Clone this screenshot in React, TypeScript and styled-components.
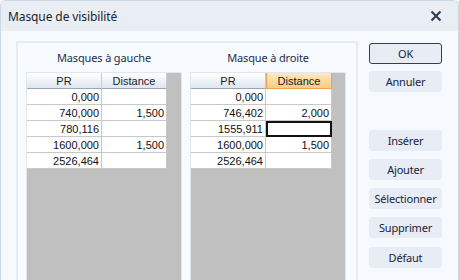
import React from "react";
import styled, { createGlobalStyle } from "styled-components";

const GlobalStyle = createGlobalStyle`
  html, body {
    margin: 0;
    padding: 0;
    width: 459px;
    height: 280px;
    overflow: hidden;
    background: #f6f9fd;
  }
`;

const uiFont = `"Noto Sans", "Open Sans", sans-serif`;
const gridFont = `"Liberation Sans", Arial, sans-serif`;

const Window = styled.div`
  box-sizing: border-box;
  width: 459px;
  height: 280px;
  display: flex;
  flex-direction: column;
  border: 1px solid #c9d7e7;
  border-bottom: none;
  border-radius: 6px 6px 0 0;
  background: #f6f9fd;
  font-family: ${uiFont};
  overflow: hidden;
`;

const TitleBar = styled.div`
  height: 30px;
  flex: none;
  display: flex;
  align-items: center;
  justify-content: space-between;
  padding: 0 16px 0 7px;
  background: #e9eef5;
  color: #1b1f27;
  font-size: 12px;
  letter-spacing: -0.1px;
`;

const CloseButton = styled.div`
  width: 12px;
  height: 12px;
  display: flex;
  color: #2d3a4c;
`;

const Body = styled.div`
  flex: 1;
  display: flex;
  padding: 10px 16px 0 15px;
  min-height: 0;
`;

const Panel = styled.div`
  box-sizing: border-box;
  width: 342px;
  height: 260px;
  flex: none;
  display: flex;
  gap: 8px;
  padding: 0 9px 0 8px;
  border: 2px solid #e7ecf3;
  background: #f7fbff;
`;

const Column = styled.div`
  display: flex;
  flex-direction: column;
  width: 156px;
`;

const Caption = styled.div`
  height: 29px;
  line-height: 29px;
  text-align: center;
  font-size: 11px;
  letter-spacing: -0.15px;
  color: #1e2b4a;
`;

const Grid = styled.div<{ $second: number }>`
  flex: 1;
  border: 1px solid #e1e7ef;
  background: #c0c0c0;
  display: grid;
  grid-template-columns: 75px ${({ $second }) => $second}px 1fr;
  grid-auto-rows: 16px;
  align-content: start;
  font-family: ${gridFont};
  font-size: 11px;
  color: #111;
`;

const HeaderCell = styled.div<{ $active?: boolean }>`
  box-sizing: border-box;
  display: flex;
  align-items: center;
  justify-content: center;
  background: ${({ $active }) =>
    $active
      ? "linear-gradient(#fde9c6, #f8cc84)"
      : "linear-gradient(#ffffff, #dfe6ef)"};
  border-right: 1px solid ${({ $active }) => ($active ? "#eea24a" : "#c5cdd8")};
  border-left: ${({ $active }) => ($active ? "1px solid #eea24a" : "none")};
  border-bottom: 1px solid ${({ $active }) => ($active ? "#eea24a" : "#9aa6b6")};
  color: #1a1a1a;
`;

const Cell = styled.div<{ $selected?: boolean }>`
  box-sizing: border-box;
  display: flex;
  align-items: center;
  justify-content: flex-end;
  padding-right: 2px;
  background: #fff;
  border-right: 1px solid #c8c8c8;
  border-bottom: 1px solid #c8c8c8;
  ${({ $selected }) =>
    $selected &&
    `
    outline: 2px solid #111;
    outline-offset: -2px;
  `}
`;

const Filler = styled.div`
  background: #c0c0c0;
`;

const ButtonColumn = styled.div`
  display: flex;
  flex-direction: column;
  margin-left: 11px;
  padding-top: 2px;
  width: 73px;
`;

const Button = styled.div<{ $default?: boolean; $space?: number }>`
  box-sizing: border-box;
  height: 21px;
  margin-top: ${({ $space }) => $space ?? 8}px;
  display: flex;
  align-items: center;
  justify-content: center;
  border-radius: 3px;
  background: #e8edf5;
  border: 1px solid ${({ $default }) => ($default ? "#3a3f47" : "#e8edf5")};
  font-size: 11px;
  letter-spacing: -0.2px;
  color: #17233a;
`;

type Row = [string, string];

const leftRows: Row[] = [
  ["0,000", ""],
  ["740,000", "1,500"],
  ["780,116", ""],
  ["1600,000", "1,500"],
  ["2526,464", ""],
];

const rightRows: Row[] = [
  ["0,000", ""],
  ["746,402", "2,000"],
  ["1555,911", ""],
  ["1600,000", "1,500"],
  ["2526,464", ""],
];

interface TableProps {
  title: string;
  rows: Row[];
  second: number;
  activeHeader?: boolean;
  selectedRow?: number;
}

const MaskTable: React.FC<TableProps> = ({
  title,
  rows,
  second,
  activeHeader,
  selectedRow,
}) => (
  <Column>
    <Caption>{title}</Caption>
    <Grid $second={second}>
      <HeaderCell>PR</HeaderCell>
      <HeaderCell $active={activeHeader}>Distance</HeaderCell>
      <Filler />
      {rows.map(([pr, dist], i) => (
        <React.Fragment key={i}>
          <Cell>{pr}</Cell>
          <Cell $selected={i === selectedRow}>{dist}</Cell>
          <Filler />
        </React.Fragment>
      ))}
    </Grid>
  </Column>
);

const App: React.FC = () => {
  return (
    <>
      <GlobalStyle />
      <Window>
        <TitleBar>
          <span>Masque de visibilité</span>
          <CloseButton>
            <svg viewBox="0 0 12 12" width="12" height="12">
              <path
                d="M1.5 1.5 L10.5 10.5 M10.5 1.5 L1.5 10.5"
                stroke="currentColor"
                strokeWidth="2"
                fill="none"
              />
            </svg>
          </CloseButton>
        </TitleBar>
        <Body>
          <Panel>
            <MaskTable title="Masques à gauche" rows={leftRows} second={65} />
            <MaskTable
              title="Masque à droite"
              rows={rightRows}
              second={66}
              activeHeader
              selectedRow={2}
            />
          </Panel>
          <ButtonColumn>
            <Button $default $space={0}>OK</Button>
            <Button $space={7}>Annuler</Button>
            <Button $space={38}>Insérer</Button>
            <Button>Ajouter</Button>
            <Button>Sélectionner</Button>
            <Button>Supprimer</Button>
            <Button $space={9}>Défaut</Button>
          </ButtonColumn>
        </Body>
      </Window>
    </>
  );
};

export default App;
